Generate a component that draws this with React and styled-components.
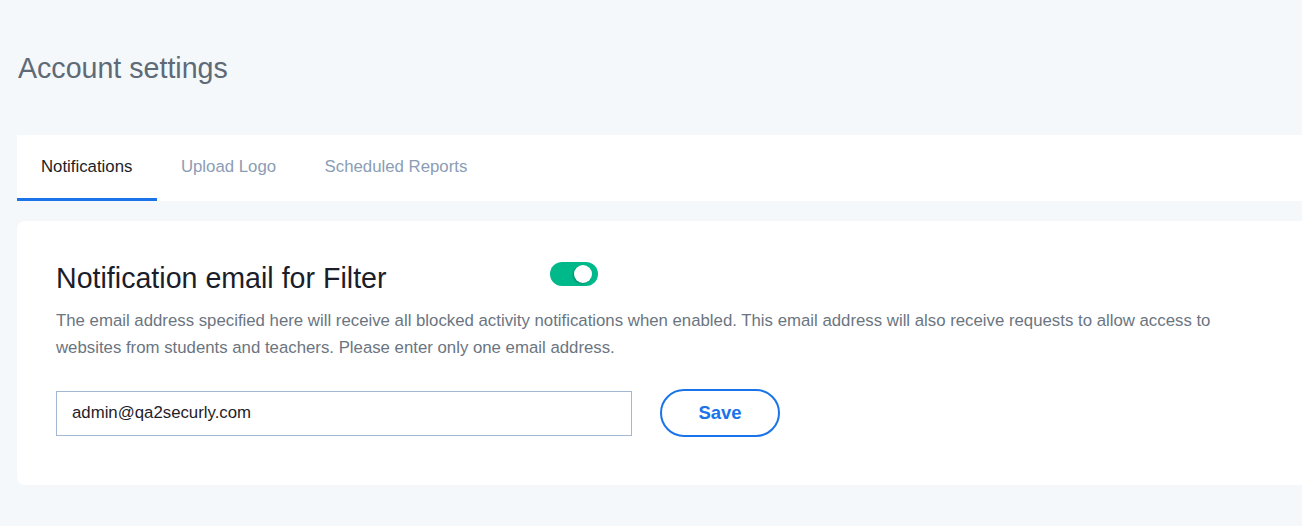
import React, { useState } from "react";
import styled, { createGlobalStyle } from "styled-components";

const GlobalStyle = createGlobalStyle`
  html, body {
    margin: 0;
    padding: 0;
    background: #f5f8fb;
    font-family: "Liberation Sans", Arial, sans-serif;
    overflow: hidden;
  }
  * { box-sizing: border-box; }
`;

const Page = styled.div`
  padding: 51px 0 40px 17px;
`;

const Title = styled.h1`
  margin: 0 0 0 1px;
  font-size: 28.6px;
  line-height: 34px;
  font-weight: 400;
  color: #5e6a76;
`;

const TabBar = styled.nav`
  margin-top: 50px;
  height: 66px;
  background: #ffffff;
  display: flex;
`;

const Tab = styled.button`
  height: 66px;
  padding: 0 24.5px 0 24px;
  border: none;
  border-bottom: 3px solid ${(p) => (p.$active ? "#1a73e8" : "transparent")};
  background: transparent;
  font-family: inherit;
  font-size: 16.8px;
  color: ${(p) => (p.$active ? "#1b1d26" : "#8b9db5")};
  cursor: pointer;
  display: flex;
  align-items: center;
`;

const Card = styled.section`
  margin-top: 20px;
  background: #ffffff;
  border-radius: 8px 0 0 8px;
  padding: 40px 0 48px 39px;
`;

const HeaderRow = styled.div`
  display: flex;
  align-items: flex-start;
`;

const Heading = styled.h2`
  margin: 0;
  width: 494px;
  font-size: 28.6px;
  line-height: 34px;
  font-weight: 400;
  color: #1b1d2a;
`;

const Toggle = styled.button`
  position: relative;
  margin-top: 1px;
  width: 48px;
  height: 24px;
  border: none;
  border-radius: 12px;
  padding: 0;
  background: ${(p) => (p.$on ? "#00b98b" : "#c5cdd6")};
  cursor: pointer;
`;

const Knob = styled.span`
  position: absolute;
  top: 3px;
  left: ${(p) => (p.$on ? "24px" : "6px")};
  width: 18px;
  height: 18px;
  border-radius: 50%;
  background: #ffffff;
  box-shadow: -1px 1px 2px rgba(0, 0, 0, 0.25);
`;

const Description = styled.p`
  margin: 12px 0 0;
  max-width: 1175px;
  font-size: 16.8px;
  line-height: 27px;
  color: #6b7581;
`;

const FormRow = styled.div`
  margin-top: 28px;
  display: flex;
  align-items: center;
  gap: 28px;
`;

const EmailInput = styled.input`
  width: 576px;
  height: 45px;
  border: 1px solid #a3b9d3;
  border-radius: 0;
  padding: 0 15px;
  font-family: inherit;
  font-size: 16.8px;
  color: #1f2129;
  outline: none;
`;

const SaveButton = styled.button`
  width: 120px;
  height: 48px;
  border: 2px solid #1a73e8;
  border-radius: 24px;
  background: #ffffff;
  color: #1a73e8;
  font-family: inherit;
  font-weight: 700;
  font-size: 18.5px;
  cursor: pointer;
`;

export default function App() {
  const [on, setOn] = useState(true);
  const [email, setEmail] = useState("admin@qa2securly.com");
  const tabs = ["Notifications", "Upload Logo", "Scheduled Reports"];
  return (
    <>
      <GlobalStyle />
      <Page>
        <Title>Account settings</Title>
        <TabBar>
          {tabs.map((t, i) => (
            <Tab key={t} $active={i === 0}>
              {t}
            </Tab>
          ))}
        </TabBar>
        <Card>
          <HeaderRow>
            <Heading>Notification email for Filter</Heading>
            <Toggle $on={on} onClick={() => setOn(!on)} aria-label="toggle">
              <Knob $on={on} />
            </Toggle>
          </HeaderRow>
          <Description>
            The email address specified here will receive all blocked activity
            notifications when enabled. This email address will also receive
            requests to allow access to websites from students and teachers.
            Please enter only one email address.
          </Description>
          <FormRow>
            <EmailInput value={email} onChange={(e) => setEmail(e.target.value)} />
            <SaveButton>Save</SaveButton>
          </FormRow>
        </Card>
      </Page>
    </>
  );
}
